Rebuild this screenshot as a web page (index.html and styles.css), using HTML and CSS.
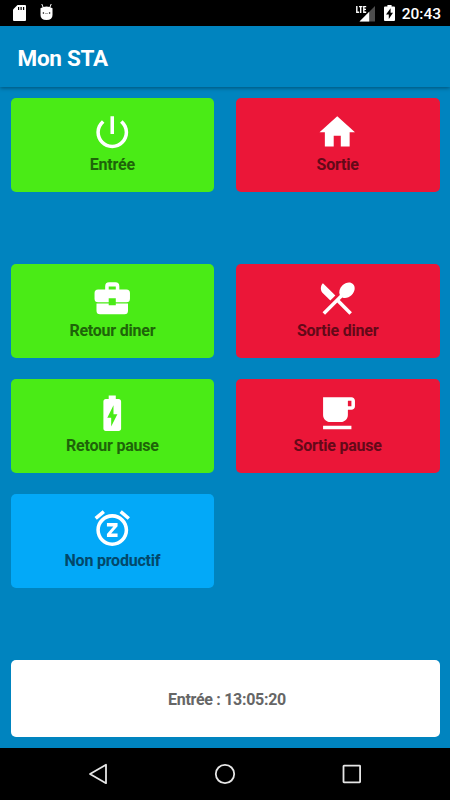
FILE: index.html
```html
<!DOCTYPE html>
<html lang="fr">
<head>
    <meta charset="UTF-8">
    <meta name="viewport" content="width=device-width, initial-scale=1.0">
    <title>Mon STA</title>
    <link rel="stylesheet" href="styles.css">
</head>
<body>
    <div class="status-bar">
        <svg class="sd-icon" width="13" height="16" viewBox="0 0 13 16">
            <path fill="#fff" d="M4.5 0H12q1 0 1 1v14q0 1-1 1H1q-1 0-1-1V4.5z"/>
            <path stroke="#000" stroke-width="1.2" d="M5.6 2v3M8.1 2v3M10.6 2v3"/>
        </svg>
        <svg class="bug-icon" width="13" height="16" viewBox="0 0 13 16">
            <path fill="none" stroke="#fff" stroke-width="1" d="M1.8 0l1.4 3.5M11.2 0L9.8 3.5"/>
            <path fill="#fff" d="M.5 4.3Q3 2.6 6.5 2.6t6 1.7V11q0 5-6 5t-6-5z"/>
            <circle cx="3.4" cy="9" r=".8"/>
            <circle cx="9.6" cy="9" r=".8"/>
            <path stroke="#777" stroke-width=".6" d="M5 9.5h3"/>
        </svg>
        <div class="status-right">
            <svg width="19" height="17" viewBox="0 0 19 17">
                <path fill="#4d4d4d" d="M19 1v15.5H3.5z"/>
                <path fill="#fff" d="M13.2 6.8v9.7H3.5z"/>
                <path d="M0 0h11.2v8.6H0z"/>
                <path fill="none" stroke="#fff" stroke-width="1.4" d="M.8 1v6.3h2.4M3 1.6h3.4M4.7 1.6V8M10.2 1.6H7.8v5.7h2.4M7.8 4.4H10"/>
            </svg>
            <svg class="battery" width="11" height="16" viewBox="0 0 11 16">
                <path fill="#fff" d="M3.4 0h4.2v1.4H10q1 0 1 1V15q0 1-1 1H1q-1 0-1-1V2.4q0-1 1-1h2.4z"/>
                <path d="M6.6 3.3L2 9.5h2.8V14L9 7.8H6.6z"/>
            </svg>
            <span class="clock">20:43</span>
        </div>
    </div>

    <header class="app-bar">
        <h1>Mon STA</h1>
    </header>

    <main class="content">
        <div class="buttons">
            <button class="btn green">
                <svg class="icon" viewBox="0 0 24 24"><path d="M13 3h-2v10h2V3zm4.83 2.17l-1.42 1.42C17.99 7.86 19 9.81 19 12c0 3.87-3.13 7-7 7s-7-3.13-7-7c0-2.19 1.01-4.14 2.58-5.42L6.17 5.17C4.23 6.82 3 9.26 3 12c0 4.97 4.03 9 9 9s9-4.03 9-9c0-2.74-1.23-5.18-3.17-6.83z"/></svg>
                <span>Entrée</span>
            </button>
            <button class="btn red">
                <svg class="icon" viewBox="0 0 24 24"><path d="M10 20v-6h4v6h5v-8h3L12 3 2 12h3v8z"/></svg>
                <span>Sortie</span>
            </button>
        </div>

        <div class="buttons">
            <button class="btn green">
                <svg class="icon" viewBox="0 0 24 24"><path fill-rule="evenodd" d="M8 7V5.2Q8 3 10.2 3h3.6Q16 3 16 5.2V7h4q2 0 2 2v3.3q0 2-2 2h-6V12h-4v2.3H4q-2 0-2-2V9q0-2 2-2zm2-1.7V7h4V5.3zM3.1 15H10v1h4v-1h6.9v4q0 2-2 2H5.1q-2 0-2-2z"/></svg>
                <span>Retour diner</span>
            </button>
            <button class="btn red">
                <svg class="icon" viewBox="0 0 24 24"><path d="M8.1 13.34l2.83-2.83L3.91 3.5c-1.56 1.56-1.56 4.09 0 5.66l4.19 4.18zm6.78-1.81c1.53.71 3.68.21 5.27-1.38 1.91-1.91 2.28-4.65.81-6.12-1.46-1.46-4.2-1.1-6.12.81-1.59 1.59-2.09 3.74-1.38 5.27L3.7 19.87l1.41 1.41L12 14.41l6.88 6.88 1.41-1.41L13.41 13l1.47-1.47z"/></svg>
                <span>Sortie diner</span>
            </button>
            <button class="btn green">
                <svg class="icon" viewBox="0 0 24 24"><path d="M15.67 4H14V2h-4v2H8.33C7.6 4 7 4.6 7 5.33v15.33C7 21.4 7.6 22 8.33 22h7.33c.74 0 1.34-.6 1.34-1.33V5.33C17 4.6 16.4 4 15.67 4zM11.4 19.5V14.5H9.2L12.7 7.5v5h2.2z"/></svg>
                <span>Retour pause</span>
            </button>
            <button class="btn red">
                <svg class="icon" viewBox="0 0 24 24"><path d="M20 3H4v10c0 2.21 1.79 4 4 4h6c2.21 0 4-1.79 4-4v-3h2c1.11 0 2-.9 2-2V5c0-1.11-.89-2-2-2zm0 5h-2V5h2v3zM4 19h16v2H4z"/></svg>
                <span>Sortie pause</span>
            </button>
            <button class="btn blue">
                <svg class="icon" viewBox="0 0 24 24"><path d="M7.88 3.39L6.6 1.86 2 5.71l1.29 1.53 4.59-3.85zM22 5.72l-4.6-3.86-1.29 1.53 4.6 3.86L22 5.72zM12 4c-4.97 0-9 4.03-9 9s4.02 9 9 9c4.97 0 9-4.03 9-9s-4.03-9-9-9zm0 16c-3.87 0-7-3.13-7-7s3.13-7 7-7 7 3.13 7 7-3.13 7-7 7zm-3-9h3.63L9 15.2V17h6v-2h-3.63L15 10.8V9H9v2z"/></svg>
                <span>Non productif</span>
            </button>
        </div>

        <div class="last-entry">Entrée : 13:05:20</div>
    </main>

    <nav class="nav-bar">
        <svg width="22" height="22" viewBox="0 0 22 22"><path d="M19 1.8v18.4L3 11z"/></svg>
        <svg width="22" height="22" viewBox="0 0 22 22"><circle cx="11" cy="11" r="9.2"/></svg>
        <svg width="22" height="22" viewBox="0 0 22 22"><rect x="2.5" y="2.7" width="16.6" height="16.6" rx=".5"/></svg>
    </nav>
</body>
</html>
```
FILE: styles.css
```css
body {
    margin: 0;
    height: 800px;
    display: flex;
    flex-direction: column;
    overflow: hidden;
    font-family: Roboto, sans-serif;
    background-color: #0084bf;
}
svg {
    display: block;
}
.status-bar {
    height: 26px;
    box-sizing: border-box;
    padding: 0 9px 0 13px;
    display: flex;
    align-items: center;
    background-color: #000;
    color: #fff;
}
.bug-icon {
    margin-left: 14px;
    margin-bottom: 2px;
}
.status-right {
    margin-left: auto;
    display: flex;
    align-items: center;
}
.battery {
    margin-left: 9px;
}
.clock {
    margin-left: 7px;
    padding-top: 2px;
    font-size: 15.5px;
    line-height: 20px;
    font-weight: 500;
}
.app-bar {
    height: 61px;
    padding: 2px 17.5px 0;
    box-sizing: border-box;
    display: flex;
    align-items: center;
    box-shadow: 0 1px 4px rgba(0, 0, 0, 0.4);
}
h1 {
    margin: 0;
    color: #fff;
    font-size: 22.5px;
    font-weight: bold;
    letter-spacing: -0.3px;
}
.content {
    flex: 1;
    display: flex;
    flex-direction: column;
    padding: 11px 10.5px;
}
.buttons {
    display: grid;
    grid-template-columns: 1fr 1fr;
    gap: 21.5px;
    margin-bottom: 72.5px;
}
.btn {
    height: 93.5px;
    padding: 12.5px 0 0;
    border: none;
    border-radius: 5px;
    display: flex;
    flex-direction: column;
    align-items: center;
    font-family: inherit;
    font-size: 16px;
    line-height: 24px;
    font-weight: bold;
    letter-spacing: -0.22px;
}
.icon {
    width: 42.5px;
    height: 42.5px;
    fill: #fff;
}
.green {
    background-color: #4aeb16;
    color: #1e6409;
}
.red {
    background-color: #eb1638;
    color: #640918;
}
.blue {
    background-color: #03a9f8;
    color: #02486a;
}
.last-entry {
    height: 77px;
    padding: 2px 0 0 4px;
    box-sizing: border-box;
    border-radius: 5px;
    background-color: #fff;
    color: #666;
    display: flex;
    align-items: center;
    justify-content: center;
    font-size: 16px;
    font-weight: bold;
    letter-spacing: -0.3px;
}
.nav-bar {
    height: 52px;
    display: flex;
    align-items: center;
    justify-content: center;
    gap: 105px;
    background-color: #000;
}
.nav-bar svg {
    fill: none;
    stroke: #e6e6e6;
    stroke-width: 1.8;
    stroke-linejoin: round;
}
```
